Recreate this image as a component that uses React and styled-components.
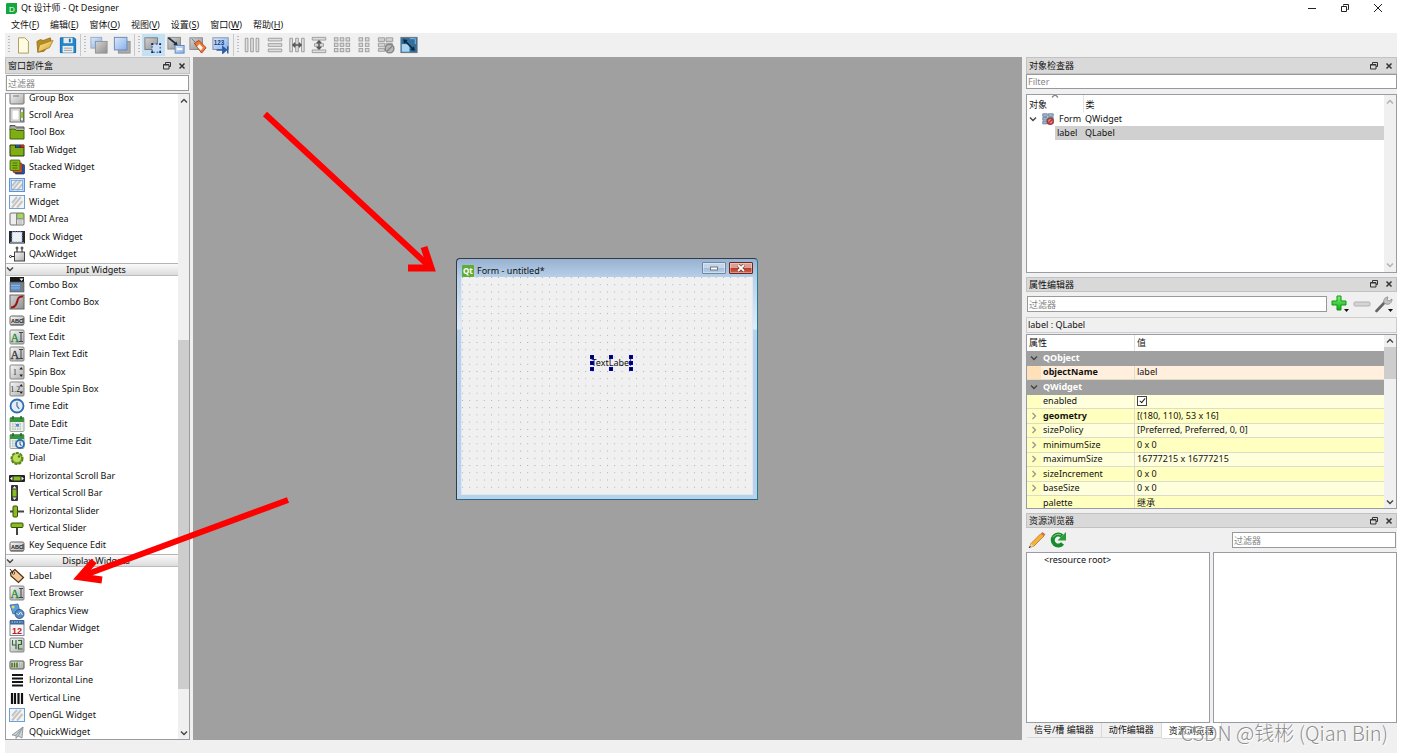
import React from "react";
import styled, { createGlobalStyle } from "styled-components";

const GlobalStyle = createGlobalStyle`
  * { box-sizing: border-box; }
  html, body, #root { height: 100%; }
  body {
    margin: 0;
    background: #fff;
    color: #111;
    font-family: "Noto Sans", "Noto Sans CJK SC", sans-serif;
    font-size: 9px;
    line-height: 14px;
    overflow: hidden;
  }
  button, input {
    font: inherit;
    color: inherit;
    margin: 0;
    padding: 0;
    border: 0;
    background: none;
  }
  svg { display: block; flex: none; }
`;

/* ---------- window frame ---------- */

const Window = styled.div`
  position: relative;
  display: flex;
  flex-direction: column;
  height: 100%;
  padding: 0 5px;
`;

const TitleBar = styled.header`
  display: flex;
  align-items: center;
  gap: 4px;
  height: 16px;
  padding: 0 13px 0 1px;
`;

const TitleText = styled.h1`
  flex: 1;
  margin: 0;
  font-size: 9px;
  font-weight: 400;
`;

const WindowButtons = styled.div`
  display: flex;
  gap: 21px;
`;

const WindowButton = styled.button`
  width: 12px;
  height: 12px;
`;

const MenuBar = styled.nav`
  display: flex;
  gap: 11px;
  height: 17px;
  padding: 1px 6px 0;
`;

const MenuItem = styled.button`
  line-height: 14px;
  white-space: nowrap;
`;

const Body = styled.div`
  display: flex;
  flex-direction: column;
  flex: 1;
  min-height: 0;
  background: #f0f0f0;
`;

const ToolBar = styled.div`
  display: flex;
  align-items: center;
  height: 24px;
  padding-left: 3px;
`;

const ToolGroup = styled.div`
  display: flex;
  align-items: center;
  height: 22px;
  padding-right: 1px;
  margin-right: 3px;
  border-right: 1px solid ${(p) => (p.$last ? "transparent" : "#c9c9c9")};
`;

const Grip = styled.span`
  width: 2px;
  height: 18px;
  margin-right: 2px;
  background: repeating-linear-gradient(#bdbdbd 0 1px, transparent 1px 3px);
`;

const ToolButtons = styled.div`
  display: grid;
  grid-auto-flow: column;
  grid-auto-columns: 1fr;
  width: ${(p) => p.$width}px;
`;

const ToolButton = styled.button`
  display: flex;
  align-items: center;
  justify-content: center;
  height: 22px;
  background: ${(p) => (p.$active ? "#c4e0f5" : "transparent")};
`;

const Workspace = styled.main`
  display: flex;
  flex: 1;
  min-height: 0;
`;

const StatusBar = styled.footer`
  height: 13px;
`;

/* ---------- docks ---------- */

const LeftDock = styled.aside`
  display: flex;
  flex-direction: column;
  width: 185px;
  margin-right: 3px;
`;

const RightDock = styled.aside`
  display: flex;
  flex-direction: column;
  gap: 4px;
  width: 371px;
  margin-left: 4px;
`;

const DockTitle = styled.div`
  display: flex;
  align-items: center;
  justify-content: space-between;
  flex: none;
  height: ${(p) => p.$height || 15}px;
  padding: 0 3px 0 2px;
  border: 1px solid #c2c2c2;
  background: #d9d9d9;
`;

const DockName = styled.h2`
  margin: 0;
  font-size: 9px;
  font-weight: 400;
  line-height: 13px;
`;

const DockButtons = styled.div`
  display: flex;
  gap: 7px;
`;

const DockButton = styled.button`
  width: 8px;
  height: 8px;
`;

const FilterInput = styled.input`
  width: ${(p) => p.$width || "100%"};
  height: ${(p) => p.$height || 16}px;
  padding: 0 1px;
  border: 1px solid #999;
  background: #fff;
  &::placeholder { color: #858585; opacity: 1; }
`;

const FilterRow = styled.div`
  display: flex;
  flex: none;
  padding: ${(p) => p.$pad};
`;

const Panel = styled.section`
  display: flex;
  flex-direction: column;
  flex: 1 1 ${(p) => p.$basis}px;
  min-height: 0;
`;

const Well = styled.div`
  display: flex;
  flex: 1;
  min-height: 0;
  min-width: 0;
  border: 1px solid #9a9ca3;
  background: #fff;
`;

const WellContent = styled.div`
  flex: 1;
  min-width: 0;
  overflow: hidden;
`;

const ScrollTrack = styled.div`
  display: flex;
  flex-direction: column;
  align-items: center;
  width: ${(p) => p.$width || 12}px;
  padding: 1px 0;
  background: #f0f0f0;
`;

const ScrollArrow = styled.button`
  display: flex;
  align-items: center;
  justify-content: center;
  width: 100%;
  height: 11px;
`;

const ScrollGap = styled.span`
  flex: ${(p) => p.$share};
`;

const ScrollThumb = styled.span`
  flex: ${(p) => p.$share};
  width: 100%;
  background: #cdcdcd;
`;

/* ---------- widget box ---------- */

const WidgetList = styled.div`
  display: flex;
  flex-direction: column;
  height: calc(100% + 7px);
  margin-top: -5px;
`;

const Category = styled.div`
  display: grid;
  grid-auto-rows: 1fr;
  flex: ${(p) => p.$rows} 1 0;
  min-height: 0;
`;

const CategoryHeader = styled.button`
  display: grid;
  grid-template-columns: 10px 1fr;
  align-items: center;
  flex: none;
  height: 13px;
  padding-right: 2px;
  border-top: 1px solid #b4b4b4;
  border-bottom: 1px solid #bbb;
  background: linear-gradient(#fafafa, #dcdcdc);
  line-height: 11px;
  text-align: center;
`;

const WidgetItem = styled.button`
  display: flex;
  align-items: center;
  gap: 4px;
  min-height: 0;
  padding-left: 3px;
  text-align: left;
  white-space: nowrap;
`;

/* ---------- design canvas ---------- */

const Canvas = styled.div`
  position: relative;
  flex: 1;
  min-width: 0;
  overflow: hidden;
  background: #a0a0a0;
`;

const FormWindow = styled.div`
  position: absolute;
  left: 263px;
  top: 201px;
  display: flex;
  flex-direction: column;
  width: 302px;
  height: 242px;
  padding: 0 4px 4px;
  border: 1px solid #333b44;
  border-right-color: #1b7f96;
  border-bottom-color: #1f6f86;
  border-radius: 4px 4px 0 0;
  background: linear-gradient(#97b1d1 0, #b9d1ea 19px, #e0ecf8 70px, #b9d1ea 71px, #b9d1ea);
`;

const FormTitle = styled.div`
  display: flex;
  align-items: center;
  gap: 3px;
  height: 18px;
  padding-left: 1px;
`;

const FormName = styled.span`
  flex: 1;
  padding-top: 5px;
`;

const FormIcon = styled.span`
  padding-top: 5px;
`;

const FormButton = styled.button`
  display: flex;
  align-items: center;
  justify-content: center;
  width: ${(p) => p.$width}px;
  height: 12px;
  border: 1px solid ${(p) => (p.$close ? "#6e2620" : "#7088a6")};
  border-radius: 1px;
  box-shadow: inset 0 0 0 1px rgba(255, 255, 255, 0.35);
  background: ${(p) =>
    p.$close
      ? "linear-gradient(#dca093 0 45%, #b93a24 50%, #c86350)"
      : "linear-gradient(#c5d6e9 0 45%, #a5bdd7 50%, #b8cee6)"};
`;

const FormBody = styled.div`
  position: relative;
  flex: 1;
  min-height: 0;
  border: 1px solid #dfe9f3;
  border-top: 0;
  background: #f0f0f0;
`;

const SelectedLabel = styled.div`
  position: absolute;
  left: 128px;
  top: 78px;
  display: flex;
  align-items: center;
  justify-content: center;
  width: 43px;
  height: 16px;
`;

const Handles = styled.svg`
  position: absolute;
  inset: 0;
`;

/* ---------- tables ---------- */

const ObjectTable = styled.table`
  width: 100%;
  border-collapse: collapse;
  table-layout: fixed;
  th {
    position: relative;
    height: 17px;
    padding: 2px 0 0 2px;
    font-weight: 400;
    text-align: left;
    line-height: 13px;
  }
  th + th { border-left: 1px solid #e2e2e2; }
  td { height: 14px; padding: 0 0 0 2px; line-height: 14px; }
`;

const SortMark = styled.span`
  position: absolute;
  left: 24px;
  top: -3px;
`;

const TreeCell = styled.td`
  && { padding: ${(p) => (p.$leaf ? "0 0 0 28px" : "0 0 0 2px")}; }
`;

const TreeNode = styled.div`
  display: flex;
  align-items: center;
  gap: ${(p) => (p.$leaf ? 0 : 5)}px;
  padding-left: ${(p) => (p.$leaf ? 2 : 0)}px;
  background: ${(p) => (p.$selected ? "#d0d0d0" : "transparent")};
`;

const ClassCell = styled.td`
  background: ${(p) => (p.$selected ? "#d0d0d0" : "transparent")};
`;

const ObjectPath = styled.div`
  flex: none;
  height: 16px;
  margin-bottom: 1px;
  padding: 0 1px;
  border: 1px solid #ccc;
  line-height: 13px;
`;

const PropertyTools = styled.div`
  display: flex;
  align-items: center;
  gap: 4px;
  flex: none;
  height: 25px;
  padding: 0 4px 0 1px;
`;

const IconButton = styled.button`
  display: flex;
  flex: none;
  align-items: center;
  justify-content: center;
  width: 18px;
  height: 18px;
`;

const PropertyTable = styled.table`
  width: 100%;
  border-collapse: separate;
  border-spacing: 0;
  table-layout: fixed;
  thead th {
    height: 16px;
    padding: 0 2px;
    font-weight: 400;
    text-align: left;
    line-height: 14px;
  }
  thead th + th { border-left: 1px solid #e0e0e0; }
`;

const rowColors = {
  group: "#a0a0a0",
  object: "#ffefdc",
  light: "#ffffdc",
  dark: "#ffffbf",
};
const gutterColors = {
  group: "#a0a0a0",
  object: "#ffe0b8",
  light: "#ffffbf",
  dark: "#ffffbf",
};

const PropertyRow = styled.tr`
  height: 15px;
  background: ${(p) => rowColors[p.$kind]};
  color: ${(p) => (p.$kind === "group" ? "#fff" : "#111")};
  &:nth-child(even) { height: 14px; }
  th, td {
    padding: 0;
    line-height: 12px;
    text-align: left;
    border-bottom: 1px solid ${(p) => (p.$kind === "group" ? "#a0a0a0" : "#dcdccb")};
  }
  th { font-weight: ${(p) => (p.$bold ? 700 : 400)}; }
  td { padding-left: 2px; border-left: 1px solid #dcdccb; }
`;

const PropertyName = styled.div`
  display: grid;
  grid-template-columns: 14px 1fr;
  gap: 2px;
  align-items: center;
`;

const Gutter = styled.span`
  display: flex;
  align-items: center;
  justify-content: center;
  height: 13px;
  background: ${(p) => gutterColors[p.$kind]};
`;

const CheckBox = styled.input`
  display: block;
  appearance: none;
  width: 10px;
  height: 10px;
  border: 1px solid #444;
  background: #fff;
  position: relative;
  &:checked::after {
    content: "";
    position: absolute;
    left: 3px;
    top: 0;
    width: 2px;
    height: 5px;
    border: solid #222;
    border-width: 0 1px 1px 0;
    transform: rotate(40deg);
  }
`;

/* ---------- resource browser ---------- */

const ResourceTools = styled.div`
  display: flex;
  align-items: center;
  gap: 3px;
  flex: none;
  height: 24px;
  padding: 0 1px 0 2px;
`;

const Spacer = styled.span`
  flex: 1;
`;

const Panes = styled.div`
  display: flex;
  gap: 3px;
  flex: 1;
  min-height: 0;
`;

const ResourceRoot = styled.div`
  padding-left: 17px;
  line-height: 13px;
`;

const Tabs = styled.div`
  display: flex;
  flex: none;
  height: 17px;
  padding-left: 1px;
`;

const Tab = styled.button`
  height: ${(p) => (p.$active ? 16 : 15)}px;
  padding: 0 7px;
  border-right: 1px solid #d9d9d9;
  border-bottom: 1px solid #d9d9d9;
  background: ${(p) => (p.$active ? "#fff" : "#f0f0f0")};
  line-height: 14px;
  white-space: nowrap;
`;

const Annotations = styled.svg`
  position: absolute;
  left: 0;
  top: 0;
  pointer-events: none;
`;

const Watermark = styled.div`
  position: absolute;
  right: 14px;
  bottom: 7px;
  color: rgba(130, 130, 130, 0.9);
  font-family: "Noto Sans CJK SC", sans-serif;
  font-size: 20px;
  font-weight: 300;
  line-height: 26px;
  text-shadow: 1px 1px 0 rgba(255, 255, 255, 0.9);
  pointer-events: none;
`;

/* ---------- drawings ---------- */

const HiddenDefs = styled.svg`
  position: absolute;
`;

const Defs = () => (
  <HiddenDefs width="0" height="0" aria-hidden="true">
    <defs>
      <linearGradient id="silver" x1="0" y1="0" x2="1" y2="1">
        <stop offset="0" stopColor="#f8f8f8" />
        <stop offset="1" stopColor="#adadad" />
      </linearGradient>
      <linearGradient id="grey" x1="0" y1="0" x2="1" y2="1">
        <stop offset="0" stopColor="#d4d4d4" />
        <stop offset="1" stopColor="#909090" />
      </linearGradient>
      <linearGradient id="blue" x1="0" y1="0" x2="1" y2="1">
        <stop offset="0" stopColor="#dbe9fb" />
        <stop offset="1" stopColor="#86b0ea" />
      </linearGradient>
      <linearGradient id="green" x1="0" y1="0" x2="0" y2="1">
        <stop offset="0" stopColor="#a9dc3a" />
        <stop offset="1" stopColor="#5c9410" />
      </linearGradient>
      <linearGradient id="gold" x1="0" y1="0" x2="1" y2="1">
        <stop offset="0" stopColor="#fdf0a8" />
        <stop offset="1" stopColor="#d49a22" />
      </linearGradient>
      <linearGradient id="plus" x1="0" y1="0" x2="0" y2="1">
        <stop offset="0" stopColor="#7df27a" />
        <stop offset="1" stopColor="#0fae12" />
      </linearGradient>
    </defs>
  </HiddenDefs>
);

const Icon = ({ size = 16, box = 16, children }) => (
  <svg width={size} height={size} viewBox={`0 0 ${box} ${box}`} aria-hidden="true">
    {children}
  </svg>
);

const Chevron = ({ dir = "down", color = "#444" }) => {
  const d = { down: "M1 2.5 4 5.5 7 2.5", up: "M1 5.5 4 2.5 7 5.5", right: "M2.5 1 5.5 4 2.5 7" }[dir];
  return (
    <Icon size={8} box={8}>
      <path d={d} fill="none" stroke={color} strokeWidth="1.4" />
    </Icon>
  );
};

const Plate = () => <rect x="1" y="1" width="14" height="14" rx="1" fill="url(#silver)" stroke="#858585" />;

const Hatch = ({ x = 2.5 }) => (
  <>
    <rect x={x} y="2.5" width={16 - 2 * x} height="11" fill="#f4f4f2" />
    <path d="M3 9 8 3M3 13.5 12 3M8 13.5 13.5 7" stroke="#c3c5c5" strokeWidth="2" />
  </>
);

const CalendarBase = () => (
  <>
    <rect x="1" y="1.5" width="14" height="14" rx="1" fill="#e9eeea" stroke="#9aa79a" />
    <rect x="1" y="1.5" width="14" height="4.5" fill="#35953c" />
    <path d="M4 0v3M12 0v3" stroke="#1d5c24" strokeWidth="1.4" />
    <path d="M3 8h10M3 10.5h10M3 13h10" stroke="#b4beb6" strokeDasharray="1.5 1" strokeWidth="1.4" />
  </>
);

const Clock = ({ cx = 8, cy = 8, r = 6.5 }) => (
  <>
    <circle cx={cx} cy={cy} r={r} fill="#e4edf6" stroke="#2d6cb5" strokeWidth="1.8" />
    <path d={`M${cx} ${cy - r * 0.6}V${cy}L${cx + r * 0.35} ${cy + r * 0.45}`} fill="none" stroke="#4c6d90" strokeWidth="1.2" />
  </>
);

const AbcPlate = () => (
  <>
    <rect x="1" y="5" width="14" height="9" rx="1.5" fill="url(#silver)" stroke="#666" />
    <rect x="1.5" y="13" width="13" height="1.5" fill="#777" />
    <text x="2" y="11.5" fontSize="5.5" fontFamily="Liberation Sans" fontWeight="700" fill="#222">ABC</text>
    <path d="M14 7v5" stroke="#333" />
  </>
);

const TextPlate = ({ color }) => (
  <>
    <Plate />
    <text x="1.5" y="12.5" fontSize="12" fontFamily="Liberation Serif" fill={color} stroke={color} strokeWidth=".3">A</text>
    <path d="M10 3.5h4M12 3.5v9M10 12.5h4" stroke="#444" strokeWidth="1" />
  </>
);

const SpinPlate = ({ text }) => (
  <>
    <Plate />
    <text x={text.length > 1 ? 1.5 : 4} y="11" fontSize="7.500" fontFamily="Liberation Serif" fill="#222">{text}</text>
    <path d="M12.200 3l1.800 2.500h-3.600zM12.200 13l1.800-2.500h-3.600z" fill="#222" />
  </>
);

const widgetIcons = {
  "Group Box": <><rect x="1" y="2" width="14" height="12" rx="1" fill="url(#silver)" stroke="#777" /><path d="M4 6h6" stroke="#777" /></>,
  "Scroll Area": <><rect x="1" y="1" width="14" height="14" fill="#e2e2e2" stroke="#6c6c6c" /><rect x="3" y="3" width="7" height="10" fill="#fff" stroke="#aaa" strokeWidth=".6" /><rect x="11.3" y="2" width="3" height="12" fill="#eee" stroke="#444" strokeWidth=".7" /><rect x="11.6" y="5" width="2.4" height="6" fill="#93c626" /></>,
  "Tool Box": <><path d="M1 1.5h5l1.5 1.5H15v3H1z" fill="#999" stroke="#555" /><path d="M1 5h5l1.500 1.500H15V15H1z" fill="#7fae14" stroke="#3d640c" /><path d="M1 4h5l1.500 1.500H15" fill="none" stroke="#ccc" strokeWidth=".8" /></>,
  "Tab Widget": <><path d="M1 3h14v11H1z" fill="#7fae14" stroke="#2c3414" /><path d="M1 3h14v3H1z" fill="#2c3414" /><path d="M1.500 3.500H6V7H1.500z" fill="#7fae14" /><path d="M7 3h3.500v2.500H7z" fill="#1758a8" /><path d="M11.500 3h3.500v2.500h-3.500z" fill="#c8281c" /></>,
  "Stacked Widget": <><rect x="6" y="5.5" width="9.5" height="9.5" rx="1" fill="#1955b5" stroke="#102f66" strokeWidth=".7" /><rect x="4" y="4" width="9" height="9.5" rx="1" fill="#e05a20" stroke="#802408" strokeWidth=".7" /><rect x="1" y="1" width="10" height="10.5" rx="1" fill="#85b616" stroke="#365a08" strokeWidth=".8" /><path d="M3.5 4h5M3.5 6.5h5M3.5 9h5" stroke="#486f12" /></>,
  Frame: <><rect x=".5" y="1.5" width="15" height="13" fill="#bcd6f5" stroke="#5d93d6" /><Hatch x={3} /><rect x="2.5" y="3.5" width="11" height="9" fill="none" stroke="#77a6dc" strokeWidth=".8" /></>,
  Widget: <><rect x=".5" y="1.5" width="15" height="13" fill="#eef3f8" stroke="#6e9fd8" /><Hatch x={1.5} /></>,
  "MDI Area": <><rect x="1" y="2" width="14" height="12" rx="1" fill="#eee" stroke="#707070" /><rect x="8" y="2.5" width="6.5" height="5" fill="#a6d46a" stroke="#6b8e42" strokeWidth=".6" /><path d="M7.5 2v12M8 8h7" stroke="#888" /><rect x="8.5" y="9" width="5" height="4" fill="#ccc" /></>,
  "Dock Widget": <><rect x="0" y="2" width="16" height="12.5" fill="#25272b" /><rect x="3" y="3" width="10" height="10" fill="#edf1f5" stroke="#8fb0dc" strokeDasharray="1.5 1" /><rect x="1" y="13" width="14" height="1.5" fill="#888" /></>,
  QAxWidget: <><rect x="5.5" y="6" width="10" height="9" fill="url(#silver)" stroke="#444" /><path d="M8 6V3M13 6V3M5 10.5H2" stroke="#222" /><circle cx="8" cy="2" r="1" fill="#fff" stroke="#222" /><circle cx="13" cy="2" r="1" fill="#fff" stroke="#222" /><circle cx="1.5" cy="10.5" r="1" fill="#fff" stroke="#222" /></>,
  "Combo Box": <><rect x="1" y="0" width="14" height="5" fill="#161616" /><path d="M10.5 1.5h4l-2 2.5z" fill="#fff" /><rect x="1" y="5" width="14" height="10" fill="#777f8a" stroke="#555" strokeWidth=".6" /><path d="M2 6.5h9v7H2z" fill="#5d93cf" /><path d="M2 8.5h9M2 11h9" stroke="#a5c6ea" strokeWidth=".7" /></>,
  "Font Combo Box": <><rect x="1" y="1" width="14" height="14" fill="url(#grey)" stroke="#666" /><path d="M14 2.500C8.500 2 9 6 7.500 9.500 6 13 4 13.500 2 13.500" fill="none" stroke="#9c1414" strokeWidth="2" /></>,
  "Line Edit": <AbcPlate />,
  "Text Edit": <TextPlate color="#178a2c" />,
  "Plain Text Edit": <TextPlate color="#333" />,
  "Spin Box": <SpinPlate text="1" />,
  "Double Spin Box": <SpinPlate text="1.2" />,
  "Time Edit": <Clock />,
  "Date Edit": <><CalendarBase /><rect x="7" y="8" width="3" height="2.5" fill="#4d86cc" /></>,
  "Date/Time Edit": <><CalendarBase /><Clock cx={11} cy={11} r={4} /></>,
  Dial: <><circle cx="8" cy="8.500" r="5.500" fill="#7ea82a" stroke="#5d8020" strokeWidth="2" strokeDasharray="3 1" /><circle cx="8" cy="8" r="4" fill="#b9e055" /><circle cx="10" cy="6.5" r="1.2" fill="#54781c" /></>,
  "Horizontal Scroll Bar": <><rect x="0" y="7" width="16" height="7" rx="1" fill="#222" /><rect x="4.5" y="8.5" width="7" height="4" fill="#86bd1f" /><path d="M3.5 8.5v4l-2.5-2zM12.5 8.5v4l2.5-2z" fill="#eee" /></>,
  "Vertical Scroll Bar": <><rect x="2" y="0" width="7" height="16" rx="1" fill="#333" /><rect x="3.5" y="4.5" width="4" height="7" fill="#86bd1f" /><path d="M3.5 3.5h4l-2-2.5zM3.5 12.5h4l-2 2.5z" fill="#eee" /></>,
  "Horizontal Slider": <><path d="M1 8.5h14" stroke="#444" strokeWidth="2" /><rect x="4" y="3" width="4.5" height="11" rx="1" fill="#8cbc1e" stroke="#33500b" /></>,
  "Vertical Slider": <><path d="M8 3v12" stroke="#444" strokeWidth="2" /><rect x="2" y="3" width="12" height="4.5" rx="1" fill="#8cbc1e" stroke="#33500b" /></>,
  "Key Sequence Edit": <AbcPlate />,
  Label: <><path d="M1.5 5 6 1.5 14.5 9.5 9.5 14.5 2 8z" fill="#f3c899" stroke="#4c2d10" strokeWidth="1.2" /><circle cx="4.5" cy="5" r="1.2" fill="#fff" stroke="#3a220c" strokeWidth=".8" /><path d="M1 1l3 4" stroke="#222" /></>,
  "Text Browser": <TextPlate color="#178a2c" />,
  "Graphics View": <><path d="M1 2l8-1 2 8-7 2z" fill="#5d9fd8" stroke="#2c69a8" strokeWidth=".8" /><circle cx="4" cy="4" r="1.500" fill="#e6d94d" /><circle cx="10.500" cy="11" r="4.500" fill="#5b8cc2" stroke="#1e4a7c" strokeWidth=".8" /><path d="M7.500 10l2 2 2-3 2 3" fill="none" stroke="#d6e8fa" /></>,
  "Calendar Widget": <><rect x="1" y="1" width="14" height="14.5" fill="#f6f6f6" stroke="#7f8894" /><rect x="1" y="0" width="14" height="4.5" fill="#3f6a9e" /><path d="M2.5 2h11" stroke="#b9d2ee" strokeDasharray="1.5 1" /><text x="3" y="13.5" fontSize="9" fontFamily="Liberation Sans" fontWeight="700" fill="#c8161a">12</text></>,
  "LCD Number": <><Plate /><path d="M3.5 3v5h3.5M7 3v9M9 3.5h3.5V7.5H9.5V12h4" fill="none" stroke="#2f6b38" strokeWidth="1.2" /></>,
  "Progress Bar": <><rect x="1" y="6" width="14" height="8" rx="1" fill="url(#silver)" stroke="#555" /><path d="M3 7.5v5M5.5 7.5v5M8 7.5v5" stroke="#3f6f12" strokeWidth="1.5" /><path d="M10.5 7.5v5M13 7.5v5" stroke="#a9b69a" /></>,
  "Horizontal Line": <path d="M3 3h11M3 6.500h11M3 10h11M3 13.500h11" stroke="#151515" strokeWidth="2.2" />,
  "Vertical Line": <path d="M3 3v11M6 3v11M9.500 3v11M13 3v11" stroke="#111" strokeWidth="2.2" />,
  "OpenGL Widget": <><rect x=".5" y="1.5" width="15" height="13" fill="#eef3f8" stroke="#6e9fd8" /><Hatch x={1.5} /></>,
  QQuickWidget: <><path d="M3 11 14 3l-1 11-4-2-2 2.5V11.5z" fill="#cdd2d4" stroke="#828a8d" strokeWidth=".8" /><path d="M7 11.5 14 3 9 12" fill="none" stroke="#8b9396" strokeWidth=".8" /></>,
};

const Cells = ({ cols }) =>
  cols.flatMap((x) =>
    [2, 8, 14].map((y) => <rect key={`${x}-${y}`} x={x} y={y} width="4" height="3.5" fill="#dcdcdc" stroke="#999" />)
  );

const toolGroups = [
  {
    width: 67,
    tools: [
      ["新建", <path d="M5 2h7l4 4v13H5z" fill="#fffbe0" stroke="#a89650" />],
      ["打开", <><path d="M1 6l4-2 3 1 8-3 1 5-8 10-7 1z" fill="#b98c1e" stroke="#8a6614" strokeWidth=".8" /><path d="M4 10 15 6l4-1-4 8-13 5z" fill="url(#gold)" stroke="#9b7620" strokeWidth=".8" /></>],
      ["保存", <><path d="M1.5 2H17l1.5 1.5V18.5h-17z" fill="#1e86cf" stroke="#0f65a8" /><rect x="5" y="2" width="10" height="6" fill="#e8e8e8" /><rect x="11" y="3" width="2" height="4" fill="#1e6da8" /><rect x="4" y="11" width="12" height="7.5" fill="#eee" /><path d="M5.5 13.5h9M5.5 16h9" stroke="#999" /></>],
    ],
  },
  {
    width: 45,
    tools: [
      ["置于底层", <><rect x="1" y="1.5" width="12" height="12" fill="url(#blue)" stroke="#94a9c4" /><rect x="6" y="6" width="13" height="13" fill="url(#grey)" stroke="#909090" /></>],
      ["置于顶层", <><rect x="6" y="6" width="13" height="13" fill="#aaa" stroke="#909090" /><rect x="1.500" y="1.500" width="14" height="14" fill="url(#blue)" stroke="#6485b4" /></>],
    ],
  },
  {
    width: 90,
    tools: [
      ["编辑窗口部件", <><rect x="1" y="2" width="14" height="13" fill="url(#grey)" stroke="#777" /><rect x="9" y="9" width="9" height="9" fill="#c9dcf5" stroke="#17356a" strokeDasharray="2 2" /><path d="M8 8h2v2H8zM17 8h2v2h-2zM8 17h2v2H8zM17 17h2v2h-2z" fill="#111e4c" /></>],
      ["编辑信号/槽", <><rect x="1" y="1.5" width="14" height="13" fill="url(#grey)" stroke="#888" /><path d="M1.5 2l9 7" stroke="#1e2c40" strokeWidth="2" /><path d="M12 11l-5-1 3.5-4z" fill="#1e2c40" /><rect x="9" y="10.5" width="10" height="8.5" fill="url(#blue)" stroke="#5a83bd" /><path d="M11 14.5h6" stroke="#fff" strokeWidth="2" /></>],
      ["编辑伙伴", <><rect x="1" y="2" width="14" height="13" fill="url(#grey)" stroke="#888" /><path d="M6 8l5-3 8 8-5 6z" fill="#f07a3a" stroke="#a63c0c" /><path d="M11.5 9l4 4-2.5 3-4-4z" fill="#fff3ea" /><path d="M3 3l5 5" stroke="#777" /></>],
      ["编辑 Tab 顺序", <><rect x="1" y="2" width="17" height="13" fill="url(#blue)" stroke="#7b90ad" /><text x="2" y="10" fontSize="7" fontFamily="Liberation Sans" fontWeight="700" fill="#12397d">123</text><path d="M5 15.5h8M12 12l4 3.5-4 3.5zM17.5 11.5v8" fill="#2e5da4" stroke="#2e5da4" strokeWidth="1.6" /></>],
    ],
  },
  {
    width: 179,
    tools: [
      ["水平布局", <path d="M2.5 2.5h3v15h-3zM8.5 2.5h3v15h-3zM14.5 2.5h3v15h-3z" fill="#dedede" stroke="#999" />],
      ["垂直布局", <path d="M2.5 2.5h15v3h-15zM2.5 8.5h15v3h-15zM2.5 14.5h15v3h-15z" fill="#dedede" stroke="#999" />],
      ["水平分裂器", <><path d="M2 2.5h3v15H2zM15 2.5h3v15h-3zM8.5 2.5h3v15h-3z" fill="#dedede" stroke="#999" /><path d="M5 10h10M8 7.500 5.500 10 8 12.500M12 7.500 14.500 10 12 12.500" fill="none" stroke="#555" strokeWidth="1.6" /></>],
      ["垂直分裂器", <><path d="M2.5 1.5h15v3h-15zM2.5 15.5h15v3h-15zM5 8.5h10v3H5z" fill="#dedede" stroke="#999" /><path d="M10 5v10M7.500 8 10 5.500l2.500 2.500M7.500 12 10 14.500l2.500-2.500" fill="none" stroke="#555" strokeWidth="1.6" /></>],
      ["栅格布局", <Cells cols={[1.5, 8, 14.5]} />],
      ["表单布局", <Cells cols={[4.5, 11.5]} />],
      ["打破布局", <><path d="M1.5 2h7v4h-7zM10 2h7.5v4H10zM1.5 8h7v4h-7zM10 8h7v4h-7zM1.5 14h7v3h-7z" fill="#d2d2d2" stroke="#999" /><circle cx="14" cy="14" r="4.8" fill="#b8b8b8" stroke="#858585" strokeWidth="1.5" /><path d="M11 17l6-6" stroke="#858585" strokeWidth="1.5" /></>],
      ["调整大小", <><rect x="1" y="1.5" width="18" height="17" fill="#326f9d" stroke="#68747e" /><rect x="2" y="9" width="8.5" height="8.5" fill="#a6d4f3" /><path d="M5 5l10 10" stroke="#0a2536" strokeWidth="1.8" /><path d="M3.5 3.5l5 1-4 4zM16.5 16.5l-5-1 4-4z" fill="#0a2536" /><path d="M11 3h6v6" fill="none" stroke="#8bc2e8" /></>],
    ],
  },
];

const menus = [["文件", "F"], ["编辑", "E"], ["窗体", "O"], ["视图", "V"], ["设置", "S"], ["窗口", "W"], ["帮助", "H"]];

const containers = ["Group Box", "Scroll Area", "Tool Box", "Tab Widget", "Stacked Widget", "Frame", "Widget", "MDI Area", "Dock Widget", "QAxWidget"];
const inputs = ["Combo Box", "Font Combo Box", "Line Edit", "Text Edit", "Plain Text Edit", "Spin Box", "Double Spin Box", "Time Edit", "Date Edit", "Date/Time Edit", "Dial", "Horizontal Scroll Bar", "Vertical Scroll Bar", "Horizontal Slider", "Vertical Slider", "Key Sequence Edit"];
const displays = ["Label", "Text Browser", "Graphics View", "Calendar Widget", "LCD Number", "Progress Bar", "Horizontal Line", "Vertical Line", "OpenGL Widget", "QQuickWidget"];

const properties = [
  { name: "QObject", kind: "group", bold: true, open: true },
  { name: "objectName", kind: "object", bold: true, value: "label" },
  { name: "QWidget", kind: "group", bold: true, open: true },
  { name: "enabled", kind: "light", check: true },
  { name: "geometry", kind: "dark", bold: true, closed: true, value: "[(180, 110), 53 x 16]" },
  { name: "sizePolicy", kind: "light", closed: true, value: "[Preferred, Preferred, 0, 0]" },
  { name: "minimumSize", kind: "dark", closed: true, value: "0 x 0" },
  { name: "maximumSize", kind: "light", closed: true, value: "16777215 x 16777215" },
  { name: "sizeIncrement", kind: "dark", closed: true, value: "0 x 0" },
  { name: "baseSize", kind: "light", closed: true, value: "0 x 0" },
  { name: "palette", kind: "dark", value: "继承" },
];

/* ---------- composed parts ---------- */

const DockHeader = ({ name, height }) => (
  <DockTitle $height={height}>
    <DockName>{name}</DockName>
    <DockButtons>
      <DockButton aria-label="浮动">
        <Icon size={8} box={8}>
          <path d="M2.5 2.5v-2h5v4H6M.5 2.5H6v4.5H.5z" fill="none" stroke="#333" />
          <path d="M.5 3h5.5" stroke="#333" />
        </Icon>
      </DockButton>
      <DockButton aria-label="关闭">
        <Icon size={8} box={8}>
          <path d="M1.5 1.5l5 5M6.5 1.5l-5 5" stroke="#333" strokeWidth="1.5" />
        </Icon>
      </DockButton>
    </DockButtons>
  </DockTitle>
);

const ScrollBar = ({ before, thumb, after, color, width }) => (
  <ScrollTrack $width={width}>
    <ScrollArrow aria-label="向上滚动"><Chevron dir="up" color={color} /></ScrollArrow>
    <ScrollGap $share={before} />
    {thumb > 0 && <ScrollThumb $share={thumb} />}
    <ScrollGap $share={after} />
    <ScrollArrow aria-label="向下滚动"><Chevron color={color} /></ScrollArrow>
  </ScrollTrack>
);

const WidgetCategory = ({ items }) => (
  <Category $rows={items.length}>
    {items.map((name) => (
      <WidgetItem key={name}>
        <Icon>{widgetIcons[name]}</Icon>
        {name}
      </WidgetItem>
    ))}
  </Category>
);

const CategoryTitle = ({ children }) => (
  <CategoryHeader>
    <Chevron />
    <span>{children}</span>
  </CategoryHeader>
);

const handlePoints = [[0, 0], [19, 0], [39, 0], [0, 6], [39, 6], [0, 12], [19, 12], [39, 12]];

const FormPreview = () => (
  <FormWindow>
    <FormTitle>
      <FormIcon>
        <Icon size={12} box={12}>
          <rect width="12" height="12" rx="1" fill="#62ac36" />
          <text x="1" y="9" fontSize="8" fontFamily="Noto Sans" fontWeight="700" fill="#fff">Qt</text>
        </Icon>
      </FormIcon>
      <FormName>Form - untitled*</FormName>
      <FormButton $width={24} aria-label="最小化">
        <Icon size={8} box={8}><rect x=".5" y="3" width="7" height="3" fill="#fff" stroke="#6e7680" /></Icon>
      </FormButton>
      <FormButton $width={24} $close aria-label="关闭窗体">
        <Icon size={8} box={8}>
          <path d="M1 1l6 6M7 1l-6 6" stroke="#5c2a28" strokeWidth="3" />
          <path d="M1 1l6 6M7 1l-6 6" stroke="#fff" strokeWidth="1.8" />
        </Icon>
      </FormButton>
    </FormTitle>
    <FormBody>
      <svg width="100%" height="100%" viewBox="0 0 400 300" preserveAspectRatio="none" aria-hidden="true">
        <defs>
          <pattern id="dots" width="10" height="10" patternUnits="userSpaceOnUse">
            <rect width="1.3" height="1.3" fill="#aaa" />
          </pattern>
        </defs>
        <rect width="400" height="300" fill="url(#dots)" />
      </svg>
      <SelectedLabel>
        TextLabel
        <Handles width="43" height="16" viewBox="0 0 43 16" aria-hidden="true">
          {handlePoints.map(([x, y]) => (
            <g key={`${x}-${y}`}>
              <rect x={x} y={y} width="4" height="4" fill="#0000c0" />
              <rect x={x + 1} y={y + 1} width="2" height="2" fill="#000020" />
            </g>
          ))}
        </Handles>
      </SelectedLabel>
    </FormBody>
  </FormWindow>
);

const FormLayoutIcon = () => (
  <Icon size={12} box={16}>
    <path d="M1 1h6v3.5H1zM8.5 1H15v3.5H8.5zM1 6h6v3.5H1zM8.5 6H15v3.5H8.5zM1 11h6v3.5H1z" fill="#9fb9d2" stroke="#5d7894" />
    <circle cx="11" cy="11" r="4" fill="#d98c8c" stroke="#a83a3a" strokeWidth="2" />
    <path d="M8 14l6-6" stroke="#a83a3a" strokeWidth="1.5" />
  </Icon>
);

const ObjectInspector = () => (
  <Panel $basis={216}>
    <DockHeader name="对象检查器" height={17} />
    <FilterRow $pad="0 0 5px">
      <FilterInput $height={15} placeholder="Filter" aria-label="Filter" />
    </FilterRow>
    <Well>
      <WellContent>
        <ObjectTable>
          <colgroup>
            <col width="56" />
            <col />
          </colgroup>
          <thead>
            <tr>
              <th>对象<SortMark><Chevron dir="up" color="#888" /></SortMark></th>
              <th>类</th>
            </tr>
          </thead>
          <tbody>
            <tr>
              <TreeCell><TreeNode><Chevron /><FormLayoutIcon />Form</TreeNode></TreeCell>
              <ClassCell>QWidget</ClassCell>
            </tr>
            <tr>
              <TreeCell $leaf><TreeNode $leaf $selected>label</TreeNode></TreeCell>
              <ClassCell $selected>QLabel</ClassCell>
            </tr>
          </tbody>
        </ObjectTable>
      </WellContent>
      <ScrollBar before={1} thumb={0} after={0} color="#b0b0b0" />
    </Well>
  </Panel>
);

const PropertyEditor = () => (
  <Panel $basis={233}>
    <DockHeader name="属性编辑器" />
    <PropertyTools>
      <FilterInput placeholder="过滤器" aria-label="过滤属性" />
      <IconButton aria-label="添加动态属性">
        <Icon size={18} box={18}>
          <path d="M6 1h4v5h5v4h-5v5H6v-5H1V6h5z" fill="url(#plus)" stroke="#0c9a10" />
          <path d="M13 14h5l-2.5 3z" fill="#111" />
        </Icon>
      </IconButton>
      <IconButton aria-label="删除动态属性">
        <Icon size={18} box={18}><rect x="1" y="7" width="16" height="4" rx="1" fill="#d4d4d4" stroke="#b2b2b2" /></Icon>
      </IconButton>
      <IconButton aria-label="配置">
        <Icon size={18} box={18}>
          <path d="M1.5 16 10 7" stroke="#666" strokeWidth="2.6" strokeLinecap="round" />
          <path d="M9 8c-1-3 1-6 4-6l-1 3 2 1 3-2c0 4-3 6-6 5z" fill="#c4c4c4" stroke="#888" strokeWidth=".8" />
          <path d="M13 14h5l-2.5 3z" fill="#111" />
        </Icon>
      </IconButton>
    </PropertyTools>
    <ObjectPath>label : QLabel</ObjectPath>
    <Well>
      <WellContent>
        <PropertyTable>
          <colgroup>
            <col width="107" />
            <col />
          </colgroup>
          <thead>
            <tr><th>属性</th><th>值</th></tr>
          </thead>
          <tbody>
            {properties.map((p) => (
              <PropertyRow key={p.name} $kind={p.kind} $bold={p.bold}>
                <th scope="row" colSpan={p.kind === "group" ? 2 : 1}>
                  <PropertyName>
                    <Gutter $kind={p.kind}>
                      {p.open && <Chevron />}
                      {p.closed && <Chevron dir="right" color="#999" />}
                    </Gutter>
                    {p.name}
                  </PropertyName>
                </th>
                {p.kind !== "group" && (
                  <td>{p.check ? <CheckBox type="checkbox" defaultChecked aria-label={p.name} /> : p.value}</td>
                )}
              </PropertyRow>
            ))}
          </tbody>
        </PropertyTable>
      </WellContent>
      <ScrollBar before={0} thumb={32} after={118} />
    </Well>
  </Panel>
);

const ResourceBrowser = () => (
  <Panel $basis={227}>
    <DockHeader name="资源浏览器" />
    <ResourceTools>
      <IconButton aria-label="编辑资源">
        <Icon size={18} box={18}>
          <path d="M1.5 16.5 3 12.5 13 2.5l3 2.5L6 15z" fill="#f3b23c" stroke="#b87614" strokeWidth=".8" />
          <path d="M13 2.5l1.5-1.5 3 2.5L16 5z" fill="#d46a5c" />
          <path d="M1.5 16.5 3 12.5 6 15z" fill="#e6cfa8" />
          <path d="M1 17l1.5-2" stroke="#333" />
        </Icon>
      </IconButton>
      <IconButton aria-label="重新加载">
        <Icon size={18} box={18}>
          <path d="M13.5 12.5A5.5 5.5 0 1 1 13 5" fill="none" stroke="#198a2c" strokeWidth="4" />
          <path d="M8.500 9.500H17V1z" fill="#2a9c3c" />
          <path d="M4 6.5A6 6 0 0 1 12 4" fill="none" stroke="#8ccc8e" />
        </Icon>
      </IconButton>
      <Spacer />
      <FilterInput $width="164px" placeholder="过滤器" aria-label="过滤资源" />
    </ResourceTools>
    <Panes>
      <Well><ResourceRoot>&lt;resource root&gt;</ResourceRoot></Well>
      <Well />
    </Panes>
    <Tabs>
      <Tab>信号/槽 编辑器</Tab>
      <Tab>动作编辑器</Tab>
      <Tab $active>资源浏览器</Tab>
    </Tabs>
  </Panel>
);

export default function App() {
  return (
    <Window>
      <GlobalStyle />
      <Defs />
      <TitleBar>
        <Icon size={11} box={11}>
          <path d="M1 0h10v9l-2 2H0V1z" fill="#12a83c" />
          <text x="3" y="8.5" fontSize="8" fontFamily="Liberation Sans" fill="#fff">D</text>
        </Icon>
        <TitleText>Qt 设计师 - Qt Designer</TitleText>
        <WindowButtons>
          <WindowButton aria-label="最小化"><Icon size={12} box={12}><path d="M2 6.5h8" stroke="#222" /></Icon></WindowButton>
          <WindowButton aria-label="还原"><Icon size={12} box={12}><path d="M4.5 3.5v-1h5v5H8.5M2.5 4.5h5v5h-5z" fill="none" stroke="#222" /></Icon></WindowButton>
          <WindowButton aria-label="关闭"><Icon size={12} box={12}><path d="M2 2l8 8M10 2l-8 8" stroke="#222" /></Icon></WindowButton>
        </WindowButtons>
      </TitleBar>
      <MenuBar>
        {menus.map(([name, key]) => (
          <MenuItem key={key}>{name}(<u>{key}</u>)</MenuItem>
        ))}
      </MenuBar>
      <Body>
        <ToolBar>
          {toolGroups.map((group, i) => (
            <ToolGroup key={group.width} $last={i === toolGroups.length - 1}>
              <Grip />
              <ToolButtons $width={group.width}>
                {group.tools.map(([name, art], j) => (
                  <ToolButton key={name} aria-label={name} $active={i === 2 && j === 0}>
                    <Icon size={18} box={20}>{art}</Icon>
                  </ToolButton>
                ))}
              </ToolButtons>
            </ToolGroup>
          ))}
        </ToolBar>
        <Workspace>
          <LeftDock>
            <DockHeader name="窗口部件盒" height={17} />
            <FilterRow $pad="1px 1px 2px">
              <FilterInput placeholder="过滤器" aria-label="过滤部件" />
            </FilterRow>
            <Well>
              <WellContent>
                <WidgetList>
                  <WidgetCategory items={containers} />
                  <CategoryTitle>Input Widgets</CategoryTitle>
                  <WidgetCategory items={inputs} />
                  <CategoryTitle>Display Widgets</CategoryTitle>
                  <WidgetCategory items={displays} />
                </WidgetList>
              </WellContent>
              <ScrollBar before={234} thumb={350} after={38} width={11} />
            </Well>
          </LeftDock>
          <Canvas>
            <FormPreview />
          </Canvas>
          <RightDock>
            <ObjectInspector />
            <PropertyEditor />
            <ResourceBrowser />
          </RightDock>
        </Workspace>
        <StatusBar />
      </Body>
      <Annotations width="460" height="600" viewBox="0 0 460 600" aria-hidden="true">
        <g fill="none" stroke="#f00" strokeWidth="6">
          <path d="M265 114 430 267M288 500 82 576" />
          <path d="M424 247 431 268 408 268M94 561 80 577 102 580" strokeWidth="7" />
        </g>
      </Annotations>
      <Watermark>CSDN @钱彬 (Qian Bin)</Watermark>
    </Window>
  );
}
